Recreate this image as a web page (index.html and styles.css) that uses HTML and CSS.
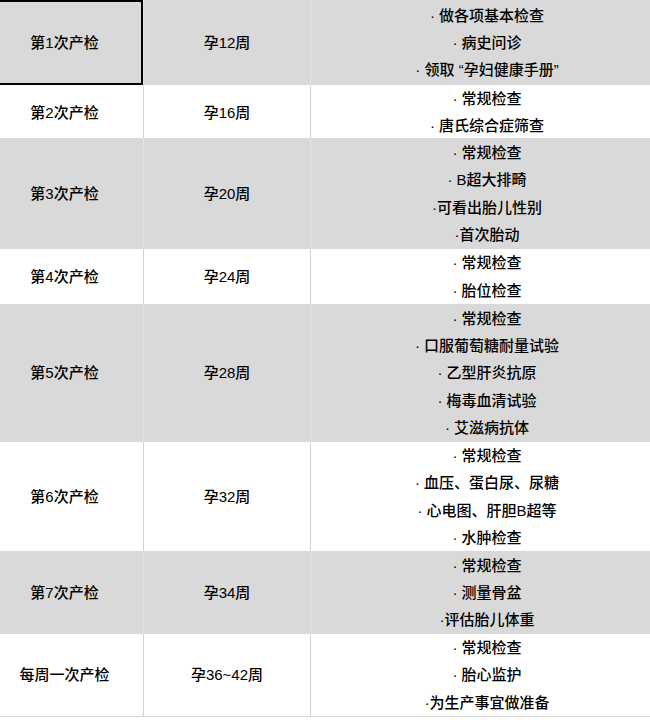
FILE: index.html
```html
<!DOCTYPE html>
<html lang="zh-CN">
<head>
<meta charset="utf-8">
<link rel="stylesheet" href="styles.css">
</head>
<body>
<div class="sheet">
  <div class="row grey h85">
    <div class="cell c1 selected">第1次产检</div>
    <div class="cell c2">孕12周</div>
    <div class="cell c3"><span>· 做各项基本检查</span><span>· 病史问诊</span><span>· 领取 “孕妇健康手册”</span></div>
  </div>
  <div class="row white h54">
    <div class="cell c1">第2次产检</div>
    <div class="cell c2">孕16周</div>
    <div class="cell c3"><span>· 常规检查</span><span>· 唐氏综合症筛查</span></div>
  </div>
  <div class="row grey h111">
    <div class="cell c1">第3次产检</div>
    <div class="cell c2">孕20周</div>
    <div class="cell c3"><span>· 常规检查</span><span>· B超大排畸</span><span>·可看出胎儿性别</span><span>·首次胎动</span></div>
  </div>
  <div class="row white h55">
    <div class="cell c1">第4次产检</div>
    <div class="cell c2">孕24周</div>
    <div class="cell c3"><span>· 常规检查</span><span>· 胎位检查</span></div>
  </div>
  <div class="row grey h138">
    <div class="cell c1">第5次产检</div>
    <div class="cell c2">孕28周</div>
    <div class="cell c3"><span>· 常规检查</span><span>· 口服葡萄糖耐量试验</span><span>· 乙型肝炎抗原</span><span>· 梅毒血清试验</span><span>· 艾滋病抗体</span></div>
  </div>
  <div class="row white h109">
    <div class="cell c1">第6次产检</div>
    <div class="cell c2">孕32周</div>
    <div class="cell c3"><span>· 常规检查</span><span>· 血压、蛋白尿、尿糖</span><span>· 心电图、肝胆B超等</span><span>· 水肿检查</span></div>
  </div>
  <div class="row grey h83">
    <div class="cell c1">第7次产检</div>
    <div class="cell c2">孕34周</div>
    <div class="cell c3"><span>· 常规检查</span><span>· 测量骨盆</span><span>·评估胎儿体重</span></div>
  </div>
  <div class="row white h82 last">
    <div class="cell c1">每周一次产检</div>
    <div class="cell c2">孕36~42周</div>
    <div class="cell c3"><span>· 常规检查</span><span>· 胎心监护</span><span>·为生产事宜做准备</span></div>
  </div>
</div>
</body>
</html>
```

FILE: styles.css
```css
html, body {
  margin: 0;
  padding: 0;
  background: #ffffff;
}

.sheet {
  width: 650px;
  font-family: "Liberation Sans", "Noto Sans CJK SC", sans-serif;
  font-size: 15px;
  font-weight: 500;
  color: #000000;
  overflow: hidden;
}

.row {
  display: grid;
  grid-template-columns: 143px 167px 340px;
  box-sizing: border-box;
}

.row.grey { background: #d9d9d9; }
.row.white { background: #ffffff; }

.h85 { height: 85px; }
.h54 { height: 53px; }
.h111 { height: 111px; }
.h55 { height: 55px; }
.h138 { height: 138px; }
.h109 { height: 109px; }
.h83 { height: 83px; }
.h82 { height: 83px; }

.row.last { border-bottom: 1px solid #d4d4d4; }

.cell {
  display: flex;
  flex-direction: column;
  align-items: center;
  justify-content: center;
  box-sizing: border-box;
  line-height: 27.3px;
  white-space: nowrap;
}

.c1 {
  padding-right: 14px;
}

.c2,
.c3 {
  border-left: 1px solid #d4d4d4;
}

.grey .c2,
.grey .c3 {
  border-left-color: #e4e4e4;
}

.c3 {
  padding-left: 13px;
}

.c3 span {
  display: block;
}

.selected {
  box-shadow: inset 0 2px 0 #000000, inset -2px 0 0 #000000, inset 0 -2px 0 #000000;
}
```
